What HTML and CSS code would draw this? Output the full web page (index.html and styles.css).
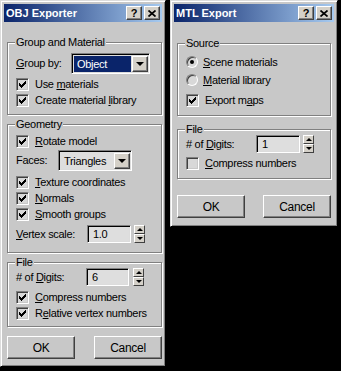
FILE: index.html
```html
<!DOCTYPE html>
<html lang="en">
<head>
  <meta charset="UTF-8">
  <title>OBJ Exporter / MTL Export</title>
  <link rel="stylesheet" href="styles.css">
</head>
<body>
  <div class="desktop">
    <!-- OBJ exporter dialog -->
    <div class="dialog dialog-obj">
      <div class="titlebar">
        <span class="title">OBJ Exporter</span>
        <span class="caption-btns">
          <span class="cap-btn">?</span>
          <span class="cap-btn"><svg class="x-glyph" viewBox="0 0 8 7" width="8" height="7"><path d="M0.5 0.5L7.5 6.5M7.5 0.5L0.5 6.5"/></svg></span>
        </span>
      </div>
      <div class="dialog-body">
        <fieldset class="group pb-6">
          <legend>Group and Material</legend>
          <div class="row h-22 mt-4">
            <span class="lbl w-55"><u>G</u>roup by:</span>
            <div class="combo w-79">
              <span class="combo-text selected">Object</span>
              <span class="combo-btn"><i class="arr-down"></i></span>
            </div>
          </div>
          <div class="check-row mt-2">
            <span class="checkbox"><svg viewBox="-1 0 9 9" width="9" height="9"><path d="M0 3v3h1v1h1v1h1v-1h1v-1h1v-1h1v-1h1v-3h-1v1h-1v1h-1v1h-1v1h-1v-1h-1v-1z"/></svg></span>
            <span>Use <u>m</u>aterials</span>
          </div>
          <div class="check-row">
            <span class="checkbox"><svg viewBox="-1 0 9 9" width="9" height="9"><path d="M0 3v3h1v1h1v1h1v-1h1v-1h1v-1h1v-1h1v-3h-1v1h-1v1h-1v1h-1v1h-1v-1h-1v-1z"/></svg></span>
            <span>Create material <u>l</u>ibrary</span>
          </div>
        </fieldset>

        <fieldset class="group mt-3 pb-9">
          <legend>Geometry</legend>
          <div class="check-row mt-3">
            <span class="checkbox"><svg viewBox="-1 0 9 9" width="9" height="9"><path d="M0 3v3h1v1h1v1h1v-1h1v-1h1v-1h1v-1h1v-3h-1v1h-1v1h-1v1h-1v1h-1v-1h-1v-1z"/></svg></span>
            <span><u>R</u>otate model</span>
          </div>
          <div class="row h-22">
            <span class="lbl w-42">Faces:</span>
            <div class="combo w-74">
              <span class="combo-text">Triangles</span>
              <span class="combo-btn"><i class="arr-down"></i></span>
            </div>
          </div>
          <div class="check-row mt-3">
            <span class="checkbox"><svg viewBox="-1 0 9 9" width="9" height="9"><path d="M0 3v3h1v1h1v1h1v-1h1v-1h1v-1h1v-1h1v-3h-1v1h-1v1h-1v1h-1v1h-1v-1h-1v-1z"/></svg></span>
            <span><u>T</u>exture coordinates</span>
          </div>
          <div class="check-row">
            <span class="checkbox"><svg viewBox="-1 0 9 9" width="9" height="9"><path d="M0 3v3h1v1h1v1h1v-1h1v-1h1v-1h1v-1h1v-3h-1v1h-1v1h-1v1h-1v1h-1v-1h-1v-1z"/></svg></span>
            <span><u>N</u>ormals</span>
          </div>
          <div class="check-row">
            <span class="checkbox"><svg viewBox="-1 0 9 9" width="9" height="9"><path d="M0 3v3h1v1h1v1h1v-1h1v-1h1v-1h1v-1h1v-3h-1v1h-1v1h-1v1h-1v1h-1v-1h-1v-1z"/></svg></span>
            <span><u>S</u>mooth groups</span>
          </div>
          <div class="row h-18 mt-3">
            <span class="lbl w-71"><u>V</u>ertex scale:</span>
            <span class="field w-44">1.0</span>
            <span class="spin"><span><i class="arr-up"></i></span><span><i class="arr-dn"></i></span></span>
          </div>
        </fieldset>

        <fieldset class="group mt-3 pb-5">
          <legend>File</legend>
          <div class="row h-18">
            <span class="lbl w-70"># of <u>D</u>igits:</span>
            <span class="field w-43">6</span>
            <span class="spin ml-4"><span><i class="arr-up"></i></span><span><i class="arr-dn"></i></span></span>
          </div>
          <div class="check-row mt-3">
            <span class="checkbox"><svg viewBox="-1 0 9 9" width="9" height="9"><path d="M0 3v3h1v1h1v1h1v-1h1v-1h1v-1h1v-1h1v-3h-1v1h-1v1h-1v1h-1v1h-1v-1h-1v-1z"/></svg></span>
            <span><u>C</u>ompress numbers</span>
          </div>
          <div class="check-row">
            <span class="checkbox"><svg viewBox="-1 0 9 9" width="9" height="9"><path d="M0 3v3h1v1h1v1h1v-1h1v-1h1v-1h1v-1h1v-3h-1v1h-1v1h-1v1h-1v1h-1v-1h-1v-1z"/></svg></span>
            <span>R<u>e</u>lative vertex numbers</span>
          </div>
        </fieldset>

        <div class="btn-row mt-9">
          <span class="btn">OK</span>
          <span class="btn">Cancel</span>
        </div>
      </div>
    </div>

    <!-- MTL export dialog -->
    <div class="dialog dialog-mtl">
      <div class="titlebar">
        <span class="title">MTL Export</span>
        <span class="caption-btns">
          <span class="cap-btn">?</span>
          <span class="cap-btn"><svg class="x-glyph" viewBox="0 0 8 7" width="8" height="7"><path d="M0.5 0.5L7.5 6.5M7.5 0.5L0.5 6.5"/></svg></span>
        </span>
      </div>
      <div class="dialog-body">
        <fieldset class="group pb-7">
          <legend>Source</legend>
          <div class="radio-row mt-4">
            <span class="radio on"></span>
            <span><u>S</u>cene materials</span>
          </div>
          <div class="radio-row">
            <span class="radio"></span>
            <span><u>M</u>aterial library</span>
          </div>
          <div class="check-row mt-3">
            <span class="checkbox"><svg viewBox="-1 0 9 9" width="9" height="9"><path d="M0 3v3h1v1h1v1h1v-1h1v-1h1v-1h1v-1h1v-3h-1v1h-1v1h-1v1h-1v1h-1v-1h-1v-1z"/></svg></span>
            <span>Export m<u>a</u>ps</span>
          </div>
        </fieldset>

        <fieldset class="group mt-7 pb-7">
          <legend>File</legend>
          <div class="row h-18">
            <span class="lbl w-70"># of <u>D</u>igits:</span>
            <span class="field w-44">1</span>
            <span class="spin"><span><i class="arr-up"></i></span><span><i class="arr-dn"></i></span></span>
          </div>
          <div class="check-row mt-2">
            <span class="checkbox"></span>
            <span><u>C</u>ompress numbers</span>
          </div>
        </fieldset>

        <div class="btn-row mt-16">
          <span class="btn">OK</span>
          <span class="btn">Cancel</span>
        </div>
      </div>
    </div>
  </div>
</body>
</html>
```

FILE: styles.css
```css
/* Classic Windows dialog look, 3ds Max grey */
body {
  margin: 0;
  background: #000;
  font-family: "Liberation Sans", Arial, sans-serif;
  font-size: 11px;
  letter-spacing: -0.3px;
  color: #000;
}

.desktop { display: flex; align-items: flex-start; gap: 4px; }

.dialog {
  box-sizing: border-box;
  background: #c8c8c8;
  border: 1px solid;
  border-color: #dcdcdc #000 #000 #dcdcdc;
  box-shadow: inset 1px 1px 0 #fff, inset -1px -1px 0 #808080;
  padding: 3px;
}
.dialog-obj { width: 166px; }
.dialog-mtl { width: 168px; }

.titlebar {
  height: 18px;
  display: flex;
  align-items: center;
  justify-content: space-between;
  padding: 0 2px;
  background: linear-gradient(to right, #0a246a, #a6caf0);
}
.title { color: #fff; font-weight: bold; letter-spacing: 0; }
.caption-btns { display: flex; gap: 2px; }
.cap-btn {
  box-sizing: border-box;
  width: 16px;
  height: 14px;
  display: flex;
  align-items: center;
  justify-content: center;
  background: #d4d0c8;
  border: 1px solid;
  border-color: #fff #404040 #404040 #fff;
  box-shadow: inset -1px -1px 0 #808080;
  font-weight: bold;
  font-size: 11px;
  letter-spacing: 0;
  line-height: 1;
}
.x-glyph path { stroke: #000; stroke-width: 1.7; fill: none; }

.dialog-body { padding: 14px 3px 4px; }
.dialog-obj .dialog-body { padding-right: 0; }
.dialog-mtl .dialog-body { padding-top: 15px; padding-bottom: 5px; }

/* group boxes (etched) */
.group {
  margin: 0;
  padding: 0 8px;
  border: 1px solid #808080;
  box-shadow: 1px 1px 0 #fff, inset 1px 1px 0 #fff;
  min-width: 0;
}
.group legend {
  padding: 0 1px;
  margin-left: -1px;
  line-height: 12px;
  background: #c8c8c8;
}

.row { display: flex; align-items: center; }
.check-row, .radio-row { display: flex; align-items: center; height: 16px; }
.radio-row { height: 18px; }

.lbl { flex: none; }

.checkbox {
  box-sizing: border-box;
  flex: none;
  width: 13px;
  height: 13px;
  padding: 1px;
  margin-right: 6px;
  background: #d8d8d8;
  border: 1px solid;
  border-color: #808080 #fff #fff #808080;
  box-shadow: inset 1px 1px 0 #404040, inset -1px -1px 0 #c8c8c8;
}
.checkbox svg { display: block; }
.checkbox path { fill: #000; }

.radio {
  box-sizing: border-box;
  position: relative;
  flex: none;
  width: 12px;
  height: 12px;
  margin-right: 5px;
  border-radius: 50%;
  background: #d8d8d8;
  border: 1px solid;
  border-color: #808080 #fff #fff #808080;
  box-shadow: inset 1px 1px 0 #404040;
}
.radio.on::after {
  content: "";
  position: absolute;
  left: 3px;
  top: 3px;
  width: 4px;
  height: 4px;
  border-radius: 50%;
  background: #000;
}

/* sunken edit / combo */
.combo, .field {
  box-sizing: border-box;
  border: 1px solid;
  border-color: #808080 #fff #fff #808080;
  box-shadow: inset 1px 1px 0 #000, inset -1px -1px 0 #dcdcdc;
  background: #dedede;
}
.combo { display: flex; height: 21px; padding: 2px 1px 1px 2px; }
.combo-text { flex: 1; display: flex; align-items: center; padding-left: 3px; }
.combo-text.selected { background: #0a246a; color: #fff; margin-right: 1px; }
.combo-btn {
  box-sizing: border-box;
  width: 16px;
  display: flex;
  align-items: center;
  justify-content: center;
  background: #d4d0c8;
  border: 1px solid;
  border-color: #fff #404040 #404040 #fff;
  box-shadow: inset -1px -1px 0 #808080;
}
.arr-down {
  width: 0; height: 0;
  border-left: 4px solid transparent;
  border-right: 4px solid transparent;
  border-top: 4px solid #000;
}

.field { height: 18px; padding: 1px 0 0 5px; line-height: 15px; }

.spin {
  display: flex;
  flex-direction: column;
  width: 11px;
  height: 18px;
  margin-left: 3px;
}
.spin > span {
  box-sizing: border-box;
  flex: 1;
  display: flex;
  align-items: center;
  justify-content: center;
  background: #d4d0c8;
  border: 1px solid;
  border-color: #fff #404040 #404040 #fff;
}
.arr-up, .arr-dn {
  width: 0; height: 0;
  border-left: 3px solid transparent;
  border-right: 3px solid transparent;
}
.arr-up { border-bottom: 3px solid #000; }
.arr-dn { border-top: 3px solid #000; }

/* push buttons */
.btn-row { display: flex; justify-content: space-between; }
.btn {
  box-sizing: border-box;
  width: 68px;
  height: 23px;
  display: flex;
  align-items: center;
  justify-content: center;
  border: 1px solid;
  border-color: #fff #404040 #404040 #fff;
  box-shadow: inset -1px -1px 0 #808080;
  font-size: 12px;
}

/* sizes */
.h-18 { height: 18px; }
.h-22 { height: 22px; }
.w-42 { width: 42px; }
.w-43 { width: 43px; }
.w-44 { width: 44px; }
.w-55 { width: 55px; }
.w-70 { width: 70px; }
.w-71 { width: 71px; }
.w-74 { width: 74px; }
.w-79 { width: 79px; }
.mt-2 { margin-top: 2px; }
.mt-3 { margin-top: 3px; }
.mt-4 { margin-top: 4px; }
.mt-7 { margin-top: 7px; }
.mt-9 { margin-top: 9px; }
.mt-16 { margin-top: 16px; }
.ml-4 { margin-left: 4px; }
.pb-5 { padding-bottom: 5px; }
.pb-6 { padding-bottom: 6px; }
.pb-7 { padding-bottom: 7px; }
.pb-9 { padding-bottom: 9px; }
```
